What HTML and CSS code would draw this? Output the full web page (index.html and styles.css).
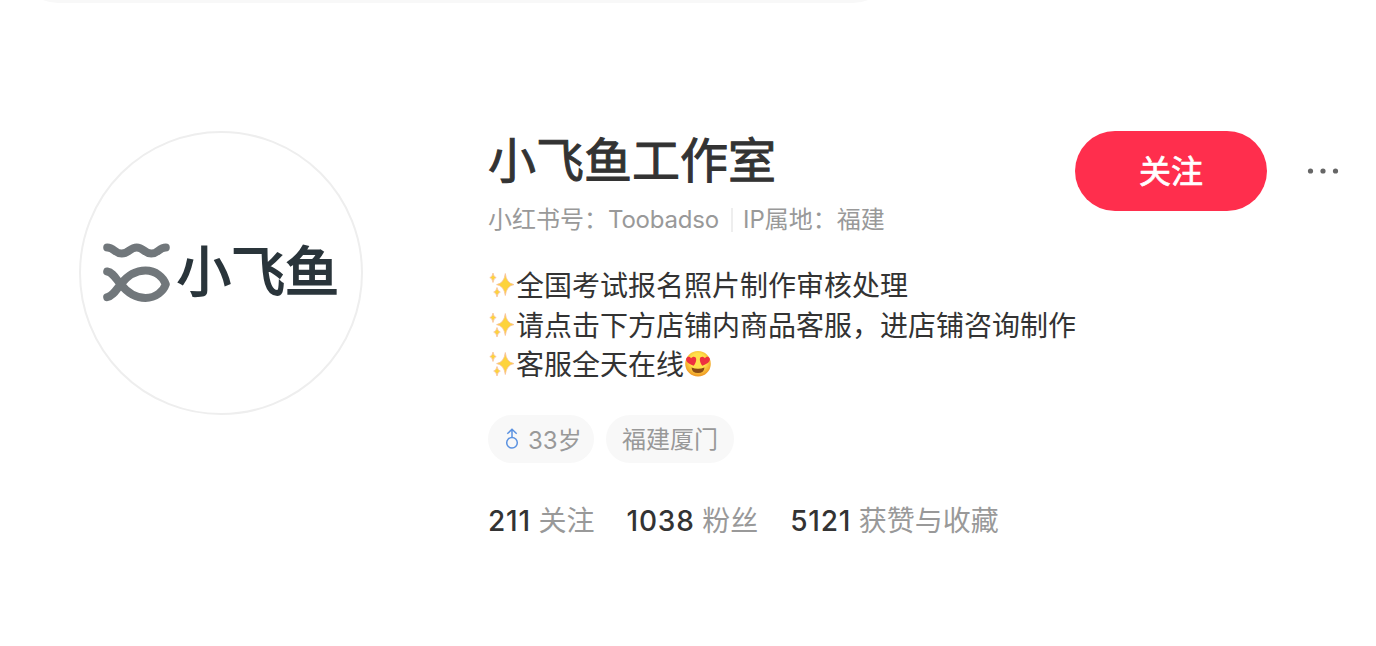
FILE: index.html
```html
<!DOCTYPE html>
<html lang="zh-CN">
<head>
    <meta charset="UTF-8">
    <meta name="viewport" content="width=device-width, initial-scale=1.0">
    <title>小飞鱼工作室</title>
    <link rel="stylesheet" href="styles.css">
</head>
<body>
    <svg width="0" height="0" class="defs">
        <symbol id="sparkles" viewBox="0 0 28 28">
            <g fill="#fdd33c" stroke="#f8c29c" stroke-width="0.8">
                <path d="M17.300 2.500Q18.500 12.300 26 13.600Q18.500 14.900 17.300 24.500Q16.100 14.900 8.600 13.600Q16.100 12.300 17.300 2.500Z"/>
                <path d="M5 2Q5.600 6 8.200 6.600Q5.600 7.200 5 11.500Q4.400 7.200 1.800 6.600Q4.400 6 5 2Z"/>
                <path d="M9 16.500Q9.700 20.400 12.300 21.100Q9.700 21.800 9 26Q8.300 21.800 5.700 21.100Q8.300 20.400 9 16.500Z"/>
            </g>
        </symbol>
    </svg>
    <div class="search-bar"></div>
    <div class="user">
        <div class="avatar">
            <svg width="68" height="60" viewBox="0 0 68 60" fill="none" stroke="#71777b" stroke-width="8" stroke-linecap="round" stroke-linejoin="round">
                <path d="M4.200 4.500C11 4.500 12 10.600 18.800 10.600S27 4.500 33.700 4.500S41.500 10.600 48.300 10.600S56 4.500 62.800 4.500"/>
                <path d="M4.200 28.500C10 29.500 13 36 17.700 41.300C23 48 31 55 42.500 55C53 55 60.500 48 62.800 41.300C60.500 34.500 53 27.600 42.500 27.600C31 27.600 23 34.500 17.700 41.300C13 47 10 53 4.200 54.200"/>
            </svg>
            <span class="logo-text">小飞鱼</span>
        </div>
        <div class="info">
            <div class="top">
                <div>
                    <h1>小飞鱼工作室</h1>
                    <div class="meta">
                        <span>小红书号：<span class="red-id">Toobadso</span></span>
                        <span class="ip">IP属地：福建</span>
                    </div>
                </div>
                <div class="actions">
                    <button type="button">关注</button>
                    <svg width="32" height="8" viewBox="0 0 32 8" fill="#666">
                        <circle cx="3.500" cy="4" r="2.600"/>
                        <circle cx="16" cy="4" r="2.600"/>
                        <circle cx="28.500" cy="4" r="2.600"/>
                    </svg>
                </div>
            </div>
            <div class="desc">
                <p><svg class="emoji"><use href="#sparkles"/></svg>全国考试报名照片制作审核处理</p>
                <p><svg class="emoji"><use href="#sparkles"/></svg>请点击下方店铺内商品客服，进店铺咨询制作</p>
                <p><svg class="emoji"><use href="#sparkles"/></svg>客服全天在线<svg class="emoji" viewBox="0 0 28 28">
                    <defs>
                        <radialGradient id="face" cx="50%" cy="40%" r="60%">
                            <stop offset="0.500" stop-color="#ffe14a"/>
                            <stop offset="1" stop-color="#ee9422"/>
                        </radialGradient>
                    </defs>
                    <circle cx="14" cy="13.800" r="12.800" fill="url(#face)"/>
                    <path d="M7.500 17.500Q14 20 20.500 17.500Q20 23 14 23T7.500 17.500Z" fill="#8a4b14"/>
                    <path d="M9.600 15.800C5 14.200 1.500 11.500 2.200 8.800C3 6 6 6.300 7.200 8.300C8.500 6 12 6.300 12.200 9.200C12.300 11.500 11 14 9.600 15.800Z" fill="#ee3040"/>
                    <path d="M18.400 15.800C23 14.200 26.500 11.500 25.800 8.800C25 6 22 6.300 20.800 8.300C19.500 6 16 6.300 15.800 9.200C15.700 11.500 17 14 18.400 15.800Z" fill="#ee3040"/>
                </svg></p>
            </div>
            <div class="tags">
                <span class="tag gender">
                    <svg width="14" height="22" viewBox="0 0 14 22" fill="none" stroke="#5b92e1" stroke-width="1.500">
                        <circle cx="7" cy="14.800" r="5.300"/>
                        <path d="M7 9.500V1.500M2.300 5.800L7 1.300L11.700 5.800"/>
                    </svg>
                    33岁
                </span>
                <span class="tag">福建厦门</span>
            </div>
            <div class="stats">
                <div><b>211</b>关注</div>
                <div><b>1038</b>粉丝</div>
                <div><b>5121</b>获赞与收藏</div>
            </div>
        </div>
    </div>
</body>
</html>
```
FILE: styles.css
```css
* {
    box-sizing: border-box;
}
body {
    margin: 0;
    font-family: Inter, "Noto Sans CJK SC", sans-serif;
    background-color: #fff;
    color: #333;
}
h1, p {
    margin: 0;
}
.defs {
    display: block;
}
.search-bar {
    width: 875px;
    height: 80px;
    margin: -77px 0 0 18px;
    border-radius: 40px;
    background-color: #f8f8f8;
}
.user {
    display: flex;
    margin: 128px 37px 0 79px;
}
.avatar {
    display: flex;
    align-items: center;
    flex: none;
    width: 284px;
    height: 284px;
    padding-left: 22px;
    border: 2px solid #eee;
    border-radius: 50%;
}
.logo-text {
    margin-left: 6px;
    font-size: 54px;
    font-weight: 400;
    line-height: 60px;
    color: #2a353b;
    -webkit-text-stroke: 1.8px #2a353b;
}
.info {
    flex: 1;
    margin-left: 125px;
}
.top {
    display: flex;
    justify-content: space-between;
}
h1 {
    padding-top: 1px;
    font-size: 48px;
    font-weight: 400;
    line-height: 58px;
    -webkit-text-stroke: 1px #333;
}
.meta {
    display: flex;
    margin-top: 15px;
    font-size: 24px;
    line-height: 30px;
    color: #999;
}
.red-id {
    letter-spacing: -0.2px;
}
.ip {
    height: 24px;
    margin: 3px 0 0 12px;
    padding-left: 10px;
    border-left: 2px solid #eee;
    line-height: 24px;
}
.actions {
    display: flex;
    align-items: center;
    height: 80px;
    gap: 40px;
}
button {
    width: 192px;
    height: 80px;
    padding-bottom: 5px;
    border: none;
    border-radius: 40px;
    background-color: #ff2e4d;
    color: #fff;
    font: 400 32px Inter, "Noto Sans CJK SC", sans-serif;
    -webkit-text-stroke: 0.7px #fff;
    cursor: pointer;
}
.desc {
    margin-top: 32px;
    font-size: 28px;
    line-height: 39.6px;
    white-space: nowrap;
}
.desc p {
    height: 39.6px;
}
.emoji {
    width: 28px;
    height: 28px;
    vertical-align: -3px;
}
.tags {
    display: flex;
    gap: 12px;
    margin-top: 29px;
}
.tag {
    display: flex;
    align-items: center;
    height: 48px;
    padding: 0 16px 2px;
    border-radius: 24px;
    background-color: #f8f8f8;
    font-size: 24px;
    color: #999;
}
.gender {
    width: 106px;
    gap: 9px;
    padding: 0 0 1px 17px;
    white-space: nowrap;
}
.gender svg {
    margin-top: 2px;
}
.stats {
    display: flex;
    gap: 32px;
    margin-top: 41px;
    font-size: 28px;
    line-height: 34px;
    color: #999;
}
.stats b {
    margin-right: 7.6px;
    font-weight: 500;
    letter-spacing: 0.8px;
    color: #333;
}
```
